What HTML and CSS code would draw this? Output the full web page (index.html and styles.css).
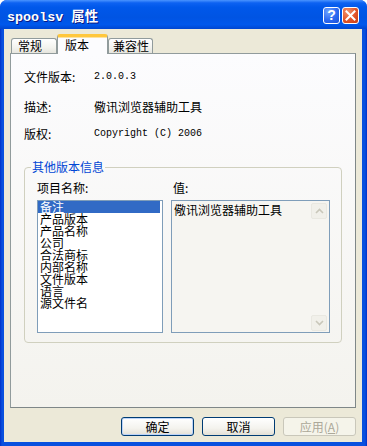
FILE: index.html
```html
<!DOCTYPE html>
<html lang="zh-CN">
<head>
    <meta charset="UTF-8">
    <title>spoolsv 属性</title>
    <link rel="stylesheet" href="styles.css">
</head>
<body>
    <div class="window">
        <div class="titlebar">
            <span class="title">spoolsv 属性</span>
            <div class="caption-btns">
                <div class="cap-btn help">?</div>
                <div class="cap-btn close">
                    <svg width="11" height="11" viewBox="0 0 11 11"><path d="M1.5 1.5 L9.5 9.5 M9.5 1.5 L1.5 9.5" stroke="#fff" stroke-width="2" stroke-linecap="square"/></svg>
                </div>
            </div>
        </div>
        <div class="frame">
            <div class="client">
                <div class="tabs">
                    <div class="tab tab-general">常规</div>
                    <div class="tab tab-version active">版本</div>
                    <div class="tab tab-compat">兼容性</div>
                </div>
                <div class="panel">
                    <div class="info-row">
                        <span class="info-label">文件版本:</span>
                        <span class="info-value mono">2.0.0.3</span>
                    </div>
                    <div class="info-row row-desc">
                        <span class="info-label">描述:</span>
                        <span class="info-value">儆讯浏览器辅助工具</span>
                    </div>
                    <div class="info-row row-copy">
                        <span class="info-label">版权:</span>
                        <span class="info-value mono">Copyright (C) 2006</span>
                    </div>

                    <fieldset class="group">
                        <legend>其他版本信息</legend>
                        <div class="group-body">
                            <div class="col">
                                <div class="col-label">项目名称:</div>
                                <ul class="list">
                                    <li class="selected">备注</li>
                                    <li>产品版本</li>
                                    <li>产品名称</li>
                                    <li>公司</li>
                                    <li>合法商标</li>
                                    <li>内部名称</li>
                                    <li>文件版本</li>
                                    <li>语言</li>
                                    <li>源文件名</li>
                                </ul>
                            </div>
                            <div class="col">
                                <div class="col-label value-label">值:</div>
                                <div class="valuebox">
                                    <div class="value-text">儆讯浏览器辅助工具</div>
                                    <div class="scrollbar">
                                        <div class="scroll-btn">
                                            <svg width="9" height="6" viewBox="0 0 9 6"><path d="M1 5 L4.5 1.5 L8 5" fill="none" stroke="#c9c7ba" stroke-width="1.6"/></svg>
                                        </div>
                                        <div class="scroll-track"></div>
                                        <div class="scroll-btn">
                                            <svg width="9" height="6" viewBox="0 0 9 6"><path d="M1 1 L4.5 4.5 L8 1" fill="none" stroke="#c9c7ba" stroke-width="1.6"/></svg>
                                        </div>
                                    </div>
                                </div>
                            </div>
                        </div>
                    </fieldset>
                </div>

                <div class="actions">
                    <button class="btn default">确定</button>
                    <button class="btn">取消</button>
                    <button class="btn" disabled>应用(<u>A</u>)</button>
                </div>
            </div>
        </div>
    </div>
</body>
</html>
```

FILE: styles.css
```css
* {
    box-sizing: border-box;
}
body {
    margin: 0;
    background: #fff;
    font-family: "Noto Sans CJK SC", sans-serif;
    font-size: 12px;
    color: #000;
}
.window {
    width: 367px;
    height: 446px;
    display: flex;
    flex-direction: column;
    border-radius: 7px 7px 0 0;
    overflow: hidden;
    background: #0846db;
}
.titlebar {
    height: 29px;
    flex: none;
    display: flex;
    align-items: center;
    justify-content: space-between;
    padding: 0 8px 0 7px;
    background: linear-gradient(#4a94ff 0%, #0d62f2 10%, #0058ea 25%, #0054e3 60%, #0058ec 85%, #0046d0 100%);
}
.title {
    color: #fff;
    font-family: "Liberation Mono", "Noto Sans CJK SC", monospace;
    font-weight: bold;
    font-size: 13.4px;
    text-shadow: 1px 1px 0 #0a1883;
    margin-top: 1px;
}
.caption-btns {
    display: flex;
    gap: 2px;
    margin-top: 1px;
}
.cap-btn {
    width: 17px;
    height: 17px;
    border: 1px solid #fff;
    border-radius: 3px;
    display: flex;
    align-items: center;
    justify-content: center;
    color: #fff;
}
.help {
    background: radial-gradient(circle at 30% 25%, #6fa4ff, #2c69f0 55%, #1a4fd8);
    font-family: "Liberation Sans", sans-serif;
    font-weight: bold;
    font-size: 14px;
    line-height: 15px;
}
.close {
    background: radial-gradient(circle at 30% 25%, #f0926c, #e1552a 55%, #c63a12);
}
.frame {
    flex: 1;
    display: flex;
    padding: 0 5px 4px 4px;
    background: linear-gradient(to right, #0030c8, #0850df 2px, #0850df calc(100% - 2px), #0030c8);
}
.client {
    flex: 1;
    display: flex;
    flex-direction: column;
    padding: 5px 6px 0 6px;
    background: #ece9d8;
}

/* tabs */
.tabs {
    display: flex;
    align-items: flex-end;
    height: 20px;
    padding-left: 1px;
    position: relative;
    z-index: 1;
}
.tab {
    height: 15px;
    margin-bottom: 1px;
    line-height: 13px;
    border: 1px solid #919b9c;
    border-bottom: none;
    border-radius: 3px 3px 0 0;
    background: linear-gradient(#fff, #f3f3ef 60%, #e6e5de);
}
.tab-general {
    width: 46px;
    padding-left: 6px;
}
.tab-version {
    width: 51px;
    padding-left: 7px;
}
.tab-compat {
    width: 45px;
    padding-left: 4px;
}
.tab.active {
    height: 20px;
    margin-bottom: 0;
    padding-top: 0;
    line-height: 15px;
    background: #fcfcfe;
    border-top: 3px solid #ffc73c;
    box-shadow: inset 0 1px 0 #fce2a0;
}
.panel {
    height: 355px;
    margin-top: -1px;
    padding: 17px 13px 0 13px;
    border: 1px solid #919b9c;
    border-right-color: #7f8788;
    border-bottom-color: #7f8788;
    background: linear-gradient(#fcfcfe, #f4f3ee);
}

/* version info */
.info-row {
    display: flex;
    height: 12px;
    line-height: 12px;
}
.row-desc {
    margin-top: 18px;
}
.row-copy {
    margin-top: 15px;
}
.info-label {
    width: 70px;
}
.mono {
    font-family: "Liberation Mono", monospace;
    font-size: 10px;
}

/* group box */
.group {
    margin: 20px 0 0 0;
    padding: 0;
    border: 1px solid #d0d0bf;
    border-radius: 4px;
}
.group legend {
    margin-left: 6px;
    padding: 0 1px;
    line-height: 14px;
    color: #0046d5;
}
.group-body {
    display: grid;
    grid-template-columns: 126px 159px;
    gap: 8px;
    padding: 8px 11px 9px 12px;
}
.col-label {
    height: 12px;
    line-height: 12px;
    margin-bottom: 6px;
}
.value-label {
    padding-left: 2px;
}
.list {
    height: 133px;
    margin: 0;
    padding: 0 2px 0 0;
    list-style: none;
    border: 1px solid #7f9db9;
    background: #fff;
}
.list li {
    height: 12px;
    line-height: 12px;
    padding-left: 2px;
}
.list li.selected {
    background: #316ac5;
    color: #fff;
}
.valuebox {
    height: 133px;
    display: flex;
    border: 1px solid #7f9db9;
    background: #f6f5f1;
}
.value-text {
    flex: 1;
    padding: 3px 0 0 2px;
    line-height: 12px;
}
.scrollbar {
    width: 16px;
    margin: 2px 2px 1px 0;
    display: flex;
    flex-direction: column;
}
.scroll-btn {
    height: 16px;
    display: flex;
    align-items: center;
    justify-content: center;
    border: 1px solid #e9e8e1;
    border-radius: 2px;
    background: #f1f0ea;
}
.scroll-track {
    flex: 1;
}

/* bottom buttons */
.actions {
    display: flex;
    justify-content: flex-end;
    gap: 8px;
    padding-top: 9px;
}
.btn {
    width: 73px;
    height: 19px;
    padding: 0;
    font-family: "Noto Sans CJK SC", sans-serif;
    font-size: 12px;
    line-height: 15px;
    color: #000;
    border: 1px solid #003c74;
    border-radius: 3px;
    background: linear-gradient(#fff, #f4f3ee 60%, #e3e0d6);
}
.btn.default {
    box-shadow: inset 0 0 0 1px #bcd3f8;
}
.btn:disabled {
    color: #aca899;
    border-color: #c9c7ba;
    background: #f5f4ea;
}
.btn u {
    text-decoration: underline;
}
```
